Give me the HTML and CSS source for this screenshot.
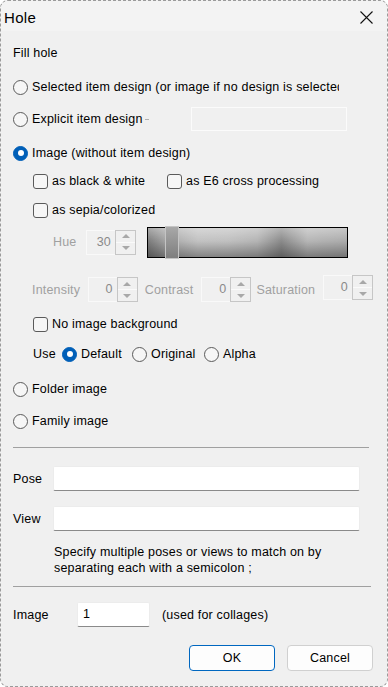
FILE: index.html
```html
<!DOCTYPE html>
<html>
<head>
<meta charset="utf-8">
<link rel="stylesheet" href="styles.css">
</head>
<body>
<div class="window">
  <div class="titlebar">
    <span class="title">Hole</span>
    <svg class="close" width="13" height="13" viewBox="0 0 13 13"><path d="M0.5 0.5 L12.5 12.5 M12.5 0.5 L0.5 12.5" stroke="#111" stroke-width="1.1" fill="none"/></svg>
  </div>
  <div class="content">
    <div class="row m10">Fill hole</div>
    <div class="row m10"><span class="radio"></span><span class="clip w-sel">Selected item design (or image if no design is selected)</span></div>
    <div class="row m8"><span class="radio"></span><span class="lbl-explicit">Explicit item design</span><span class="dash"></span><span class="disabled-box"></span></div>
    <div class="row m10"><span class="radio checked"></span><span class="clip w-img">Image (without item design)</span></div>
    <div class="row m4 indent"><span class="cb-group"><span class="check"></span>as black &amp; white</span><span class="check"></span>as E6 cross processing</div>
    <div class="row m5 indent"><span class="check"></span>as sepia/colorized</div>
    <div class="row hue-row">
      <span class="dis hue-lbl">Hue</span>
      <span class="spin"><span class="spin-field">30</span><span class="spin-btns"><span class="up"></span><span class="down"></span></span></span>
      <span class="slider"><span class="thumb"></span></span>
    </div>
    <div class="row adj-row">
      <span class="dis lbl-int">Intensity</span>
      <span class="spin"><span class="spin-field">0</span><span class="spin-btns"><span class="up"></span><span class="down"></span></span></span>
      <span class="dis lbl-con">Contrast</span>
      <span class="spin"><span class="spin-field">0</span><span class="spin-btns"><span class="up"></span><span class="down"></span></span></span>
      <span class="dis lbl-sat">Saturation</span>
      <span class="spin raised"><span class="spin-field">0</span><span class="spin-btns"><span class="up"></span><span class="down"></span></span></span>
    </div>
    <div class="row m10 indent"><span class="check"></span>No image background</div>
    <div class="row m6 indent">
      <span class="use-lbl">Use</span>
      <span class="opt opt-def"><span class="radio checked"></span>Default</span>
      <span class="opt opt-orig"><span class="radio"></span>Original</span>
      <span class="opt"><span class="radio"></span>Alpha</span>
    </div>
    <div class="row m11"><span class="radio"></span>Folder image</div>
    <div class="row m8"><span class="radio"></span>Family image</div>
    <div class="sep sep1"></div>
    <div class="field-row m18"><span class="f-lbl">Pose</span><span class="textbox wide"></span></div>
    <div class="field-row m15"><span class="f-lbl">View</span><span class="textbox wide"></span></div>
    <div class="hint">Specify multiple poses or views to match on by<br>separating each with a semicolon ;</div>
    <div class="sep sep2"></div>
    <div class="field-row m15"><span class="img-lbl">Image</span><span class="textbox small">1</span><span>(used for collages)</span></div>
    <div class="buttons">
      <button class="btn default">OK</button>
      <button class="btn">Cancel</button>
    </div>
  </div>
</div>
</body>
</html>
```
FILE: styles.css
```css
html, body {
  margin: 0;
  padding: 0;
  background: #ffffff;
}
body {
  font-family: "Liberation Sans", Arial, sans-serif;
  font-size: 12.5px;
  letter-spacing: 0.18px;
  color: #000;
}
.window {
  box-sizing: border-box;
  width: 388px;
  height: 687px;
  border: 1px dashed #9a9a9a;
  border-radius: 8px;
  background: #f0f0f0;
  overflow: hidden;
}
.titlebar {
  height: 30px;
  background: #f3f3f3;
  display: flex;
  align-items: center;
  padding: 0 14px 0 3px;
}
.title {
  font-size: 15px;
  letter-spacing: 0.3px;
  flex: 1;
  padding-top: 2px;
}
.close {
  margin-top: 2px;
}
.content {
  padding: 0 14px 0 12px;
  display: flex;
  flex-direction: column;
}
.row {
  height: 24px;
  display: flex;
  align-items: center;
  white-space: nowrap;
}
.m4 { margin-top: 4px; }
.m5 { margin-top: 5px; }
.m6 { margin-top: 6px; }
.m8 { margin-top: 8px; }
.m10 { margin-top: 10px; }
.m11 { margin-top: 11px; }
.m15 { margin-top: 15px; }
.m18 { margin-top: 18px; }
.indent { padding-left: 20px; }

.radio {
  box-sizing: border-box;
  width: 15px;
  height: 15px;
  border-radius: 50%;
  border: 1px solid #5a5a5a;
  background: #f6f6f6;
  margin-right: 4px;
  flex: none;
  display: flex;
  align-items: center;
  justify-content: center;
}
.radio.checked {
  background: #005fb8;
  border-color: #005fb8;
}
.radio.checked::after {
  content: "";
  width: 6px;
  height: 6px;
  border-radius: 50%;
  background: #fff;
}
.check {
  box-sizing: border-box;
  width: 15px;
  height: 15px;
  border-radius: 3px;
  border: 1px solid #5a5a5a;
  background: #f6f6f6;
  margin-right: 4px;
  flex: none;
}
.clip {
  overflow: hidden;
  white-space: nowrap;
}
.w-sel { width: 307px; }
.w-img { width: 158px; }
.lbl-explicit { width: 113px; }
.dash {
  width: 4px;
  height: 1px;
  background: #b0b0b0;
  margin-right: 42px;
}
.disabled-box {
  box-sizing: border-box;
  width: 156px;
  height: 24px;
  border: 1px solid #fbfbfb;
  background: #f0f0f0;
}
.cb-group {
  display: flex;
  align-items: center;
  width: 134px;
}

.dis { color: #a0a0a0; }
.hue-row {
  height: 32px;
  margin-top: 4px;
  padding-left: 40px;
}
.hue-lbl { width: 33px; }
.spin {
  box-sizing: border-box;
  width: 50px;
  height: 25px;
  display: flex;
  border: 1px solid #f9f9f9;
  flex: none;
}
.spin-field {
  flex: 1;
  text-align: right;
  padding-right: 4px;
  color: #8a8a8a;
  line-height: 22px;
}
.spin-btns {
  box-sizing: border-box;
  width: 21px;
  margin: -1px -1px -1px 0;
  border: 1px solid #c6c6c6;
  display: flex;
  flex-direction: column;
}
.spin-btns span {
  flex: 1;
  display: flex;
  align-items: center;
  justify-content: center;
}
.spin-btns .up {
  border-bottom: 1px solid #fafafa;
}
.spin-btns .up::after {
  content: "";
  border-left: 4px solid transparent;
  border-right: 4px solid transparent;
  border-bottom: 4px solid #a8a8a8;
}
.spin-btns .down::after {
  content: "";
  border-left: 4px solid transparent;
  border-right: 4px solid transparent;
  border-top: 4px solid #a8a8a8;
}
.slider {
  position: relative;
  box-sizing: border-box;
  width: 201px;
  height: 31px;
  margin-left: 11px;
  border: 1px solid #000;
  background:
    linear-gradient(to bottom, rgba(255,255,255,0.35) 0%, rgba(255,255,255,0) 45%, rgba(0,0,0,0.32) 100%),
    linear-gradient(to right, #7c7c7c 0%, #a8a8a8 10%, #c2c2c2 25%, #c0c0c0 40%, #b4b4b4 55%, #8a8a8a 67%, #b6b6b6 80%, #ababab 100%);
}
.thumb {
  position: absolute;
  left: 17px;
  top: -2px;
  box-sizing: border-box;
  width: 14px;
  height: 33px;
  border: 1.5px solid #c4c4c4;
  background: linear-gradient(to bottom, #a8a8a8, #7e7e7e);
}

.adj-row {
  height: 25px;
  margin-top: 19px;
  padding-left: 19px;
}
.lbl-int { width: 56px; }
.lbl-con { width: 57px; margin-left: 7px; }
.lbl-sat { width: 67px; margin-left: 5px; }
.raised {
  align-self: flex-start;
  margin-top: -2px;
}

.use-lbl { width: 29px; }
.opt {
  display: flex;
  align-items: center;
}
.opt-def { width: 70px; }
.opt-orig { width: 72px; }

.sep {
  height: 1px;
  background: #a0a0a0;
}
.sep1 { margin-top: 14px; width: 356px; }
.sep2 { margin-top: 10px; width: 358px; }

.field-row {
  height: 25px;
  display: flex;
  align-items: center;
  white-space: nowrap;
}
.f-lbl { width: 40px; }
.img-lbl { width: 64px; }
.textbox {
  box-sizing: border-box;
  height: 25px;
  background: #ffffff;
  border: 1px solid #ececec;
  border-bottom-color: #8a8a8a;
  border-radius: 2px;
  padding-left: 5px;
  line-height: 23px;
}
.wide { width: 307px; }
.small { width: 73px; margin-right: 12px; }
.hint {
  margin-top: 13px;
  padding-left: 41px;
  line-height: 16px;
}
.buttons {
  margin-top: 18px;
  display: flex;
  justify-content: flex-end;
  gap: 12px;
}
.btn {
  box-sizing: border-box;
  width: 86px;
  height: 26px;
  border: 1px solid #d0d0d0;
  border-radius: 4px;
  background: #fdfdfd;
  font-family: "Liberation Sans", Arial, sans-serif;
  font-size: 12.5px;
  letter-spacing: 0.18px;
  color: #000;
  padding: 0;
}
.btn.default {
  border-color: #0067c0;
}
```
